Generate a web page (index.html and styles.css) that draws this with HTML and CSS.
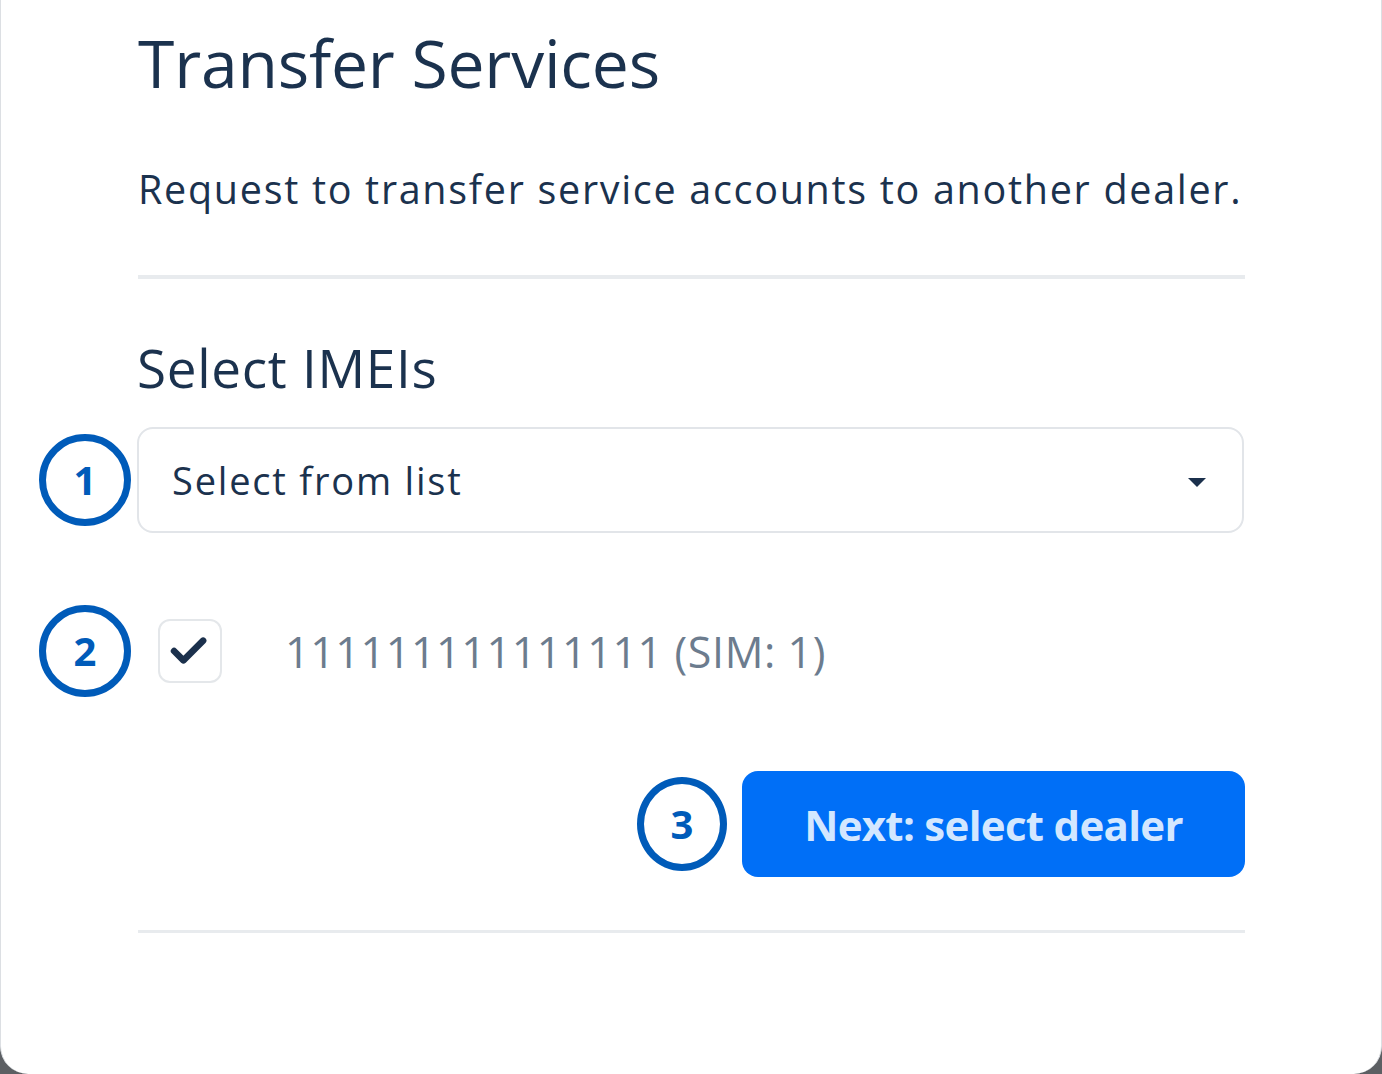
FILE: index.html
```html
<!DOCTYPE html>
<html lang="en">
<head>
  <meta charset="UTF-8" />
  <meta name="viewport" content="width=device-width, initial-scale=1.0" />
  <title>Transfer Services</title>
  <link rel="stylesheet" href="styles.css">
</head>
<body>
  <div class="modal">
    <h1 class="title">Transfer Services</h1>
    <p class="lead">Request to transfer service accounts to another dealer.</p>
    <hr class="divider" />

    <h2 class="section-title">Select IMEIs</h2>

    <div class="step-row select-row">
      <span class="step">1</span>
      <div class="select">
        <span>Select from list</span>
        <span class="caret"></span>
      </div>
    </div>

    <div class="step-row check-row">
      <span class="step">2</span>
      <label class="imei">
        <span class="checkbox">
          <svg viewBox="0 0 64 64" width="64" height="64">
            <path d="M15 32 L25 42 L46 21" fill="none" stroke="#1b304c" stroke-width="7" stroke-linecap="round" stroke-linejoin="round" />
          </svg>
        </span>
        <span class="imei-text">111111111111111 (SIM: 1)</span>
      </label>
    </div>

    <div class="actions">
      <span class="step step-oval">3</span>
      <button class="btn-primary">Next: select dealer</button>
    </div>

    <hr class="divider divider-thin" />
  </div>
</body>
</html>
```

FILE: styles.css
```css
html, body {
  margin: 0;
  padding: 0;
}
body {
  background: #5c5f63;
  font-family: "Open Sans", "Noto Sans", sans-serif;
  color: #1b324e;
}
.modal {
  width: 1382px;
  height: 1074px;
  background: #fff;
  border-left: 1px solid #dcdfe3;
  border-right: 1px solid #dcdfe3;
  border-radius: 0 0 28px 28px;
  padding: 22px 0 0 136px;
  box-sizing: border-box;
}
.title {
  margin: 0 0 0 1px;
  font-size: 66px;
  line-height: 80px;
  font-weight: 400;
  letter-spacing: -0.2px;
}
.lead {
  margin: 62px 0 0 1px;
  font-size: 39.5px;
  line-height: 50px;
  letter-spacing: 1.7px;
  width: 1200px;
}
.divider {
  margin: 61px 0 0 1px;
  width: 1107px;
  height: 4px;
  border: none;
  background: #e8ebee;
}
.divider-thin {
  margin-top: 53px;
  height: 3px;
}
.section-title {
  margin: 57px 0 0;
  font-size: 53px;
  line-height: 64px;
  font-weight: 400;
  letter-spacing: 0.7px;
}
.step-row {
  display: flex;
  align-items: center;
  margin-left: -98px;
  gap: 6px;
}
.select-row {
  margin-top: 27px;
}
.step {
  width: 92px;
  height: 92px;
  box-sizing: border-box;
  border: 7px solid #005bb9;
  border-radius: 50%;
  display: flex;
  align-items: center;
  justify-content: center;
  color: #005bb9;
  font-weight: 700;
  font-size: 40px;
  line-height: 1;
  flex-shrink: 0;
}
.step-oval {
  width: 90px;
  height: 94px;
}
.select {
  width: 1107px;
  height: 106px;
  box-sizing: border-box;
  border: 2px solid #e2e5e9;
  border-radius: 16px;
  display: flex;
  align-items: center;
  justify-content: space-between;
  padding: 0 36px 0 33px;
  font-size: 38px;
  letter-spacing: 1.8px;
}
.caret {
  width: 0;
  height: 0;
  margin-top: 4px;
  border-left: 9px solid transparent;
  border-right: 9px solid transparent;
  border-top: 9px solid #1b304c;
}
.check-row {
  margin-top: 72px;
}
.imei {
  display: flex;
  align-items: center;
  gap: 63px;
  margin-left: 21px;
}
.checkbox {
  width: 64px;
  height: 64px;
  box-sizing: border-box;
  border: 2px solid #e4e7ea;
  border-radius: 12px;
  display: flex;
  align-items: center;
  justify-content: center;
}
.checkbox svg {
  display: block;
}
.imei-text {
  font-size: 43px;
  color: #6c7c8e;
  letter-spacing: 0.6px;
}
.actions {
  width: 1108px;
  margin-top: 74px;
  display: flex;
  justify-content: flex-end;
  align-items: center;
  gap: 15px;
}
.btn-primary {
  width: 503px;
  height: 106px;
  border: none;
  border-radius: 16px;
  background: #006ff7;
  color: #d3e7ff;
  font-family: "Open Sans", "Noto Sans", sans-serif;
  font-weight: 700;
  font-size: 42px;
  letter-spacing: -0.7px;
  cursor: pointer;
}
```
